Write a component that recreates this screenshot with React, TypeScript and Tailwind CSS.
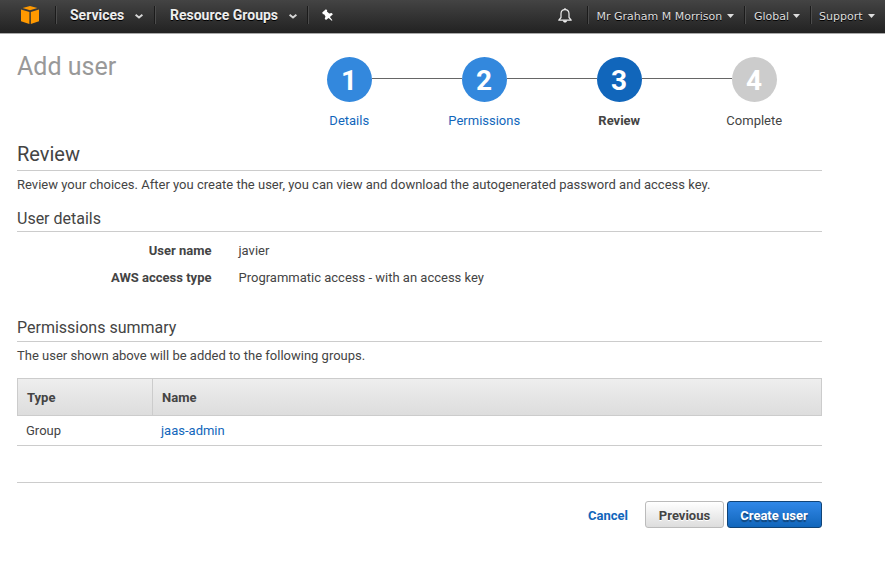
import React from "react";

const steps = [
  { n: 1, label: "Details", circle: "bg-[#3388dd]", text: "text-[#1166bb]" },
  { n: 2, label: "Permissions", circle: "bg-[#3388dd]", text: "text-[#1166bb]" },
  { n: 3, label: "Review", circle: "bg-[#1166bb]", text: "font-bold text-[#444444]" },
  { n: 4, label: "Complete", circle: "bg-[#cccccc]", text: "text-[#444444]" },
];

function Logo() {
  return (
    <svg className="ml-[21px] mt-[6px] h-[18px] w-[18px] shrink-0" viewBox="0 0 18 18" fill="#ff9900">
      <path d="M0 3.4 8.4 6v12L0 15.2z" />
      <path d="M18 3.4 9.8 6v12L18 15.2z" />
      <path d="M1.6 2.1 9 0l7.4 2.1L9 4.3z" />
    </svg>
  );
}

function Divider() {
  return <div className="mt-[6px] h-[18px] w-[2px] shrink-0 self-start border-l border-r border-l-[#1b1b1b] border-r-[#4c4c4c]" />;
}

function Chevron() {
  return (
    <svg className="h-[5px] w-[8px] shrink-0" viewBox="0 0 8 5" fill="none" stroke="#d6d6d6" strokeWidth="1.9">
      <path d="M.6.8 4 3.6 7.4.8" />
    </svg>
  );
}

function Caret() {
  return (
    <svg className="h-[4px] w-[7px] shrink-0" viewBox="0 0 7 4" fill="#dddddd">
      <path d="M0 0h7L3.5 4z" />
    </svg>
  );
}

function NavMenu({ label, className }: { label: string; className: string }) {
  return (
    <div className="flex h-[32px] shrink-0 items-center font-['DejaVu_Sans',sans-serif] text-[11px] text-[#dddddd]">
      <span className={`shrink-0 whitespace-nowrap pt-[2px] ${className}`}>{label}</span>
      <Caret />
    </div>
  );
}

function Nav() {
  return (
    <nav className="flex h-[34px] border-b border-[#aaaaaa] bg-linear-to-b from-[#444444] to-[#222222] [text-shadow:0_1px_0_#000]">
      <Logo />
      <div className="w-[16px] shrink-0" />
      <Divider />
      <div className="flex h-[31px] w-[97px] shrink-0 items-center pl-[13px] text-[14px] font-bold text-[#eeeeee]">
        <span className="w-[65px] shrink-0 whitespace-nowrap">Services</span>
        <span className="pt-[2px]"><Chevron /></span>
      </div>
      <Divider />
      <div className="flex h-[31px] w-[151px] shrink-0 items-center pl-[14px] text-[14px] font-bold text-[#eeeeee]">
        <span className="w-[119px] shrink-0 whitespace-nowrap">Resource Groups</span>
        <span className="pt-[2px]"><Chevron /></span>
      </div>
      <Divider />
      <svg className="ml-[13px] mt-[9px] h-[12px] w-[11px] shrink-0" viewBox="0 0 11 12" fill="#ffffff">
        <path d="M.2 3.6 3.9.2 5.2 1.3 4.9 2.6 7.2 4.6 9.6 4 10.9 5.2 7.9 8 10.4 11.3 9.8 11.8 6.6 9.1 4 11 2.7 9.8 3.5 7.6 2.1 5.2.9 5.2z" />
      </svg>
      <svg className="ml-[225px] mt-[8px] h-[15px] w-[14px] shrink-0" viewBox="0 0 14 15" fill="none" stroke="#eeeeee" strokeWidth="1.2">
        <path d="M.8 12.2h12.4L11 9.5V5.8C11 3.1 9.5 1.6 7 1.6S3 3.1 3 5.8v3.7z" strokeLinejoin="round" />
        <path d="M7 0v1.6" />
        <path d="M5 12.5h4C9 14 8.2 14.6 7 14.6S5 14 5 12.5z" fill="#eeeeee" stroke="none" />
      </svg>
      <div className="w-[15px] shrink-0" />
      <Divider />
      <NavMenu label="Mr Graham M Morrison" className="w-[138px] pl-[7.5px]" />
      <div className="w-[10px] shrink-0" />
      <Divider />
      <NavMenu label="Global" className="w-[47px] pl-[8px]" />
      <div className="w-[10px] shrink-0" />
      <Divider />
      <NavMenu label="Support" className="w-[56px] pl-[7px]" />
    </nav>
  );
}

function Steps() {
  return (
    <div className="grid w-[540px] grid-cols-4 pt-[23px]">
      {steps.map((s) => (
        <div key={s.n} className="flex flex-col items-center">
          <div className="flex w-full items-start">
            <div className={s.n === 1 ? "mt-[21px] h-px w-[45px]" : "mt-[21px] h-px w-[45px] bg-[#666666]"} />
            <div className={`flex h-[45px] w-[45px] items-center justify-center rounded-full pr-px pt-[3px] text-[28px] font-bold text-white ${s.circle}`}>
              {s.n}
            </div>
            <div className={s.n === 4 ? "mt-[21px] h-px w-[45px]" : "mt-[21px] h-px w-[45px] bg-[#666666]"} />
          </div>
          <div className={`mt-[9px] h-[20px] pr-[0.5px] leading-[20px] ${s.text}`}>{s.label}</div>
        </div>
      ))}
    </div>
  );
}

export default function App() {
  return (
    <div className="h-[571px] w-[885px] overflow-hidden bg-white font-['Roboto',sans-serif] text-[13px] text-[#444444]">
      <Nav />
      <main className="ml-[17px] w-[805px]">
        <header className="flex h-[104px] justify-between">
          <h1 className="pt-[18px] text-[25px] leading-[30px] text-[#999999]">Add user</h1>
          <Steps />
        </header>
        <h2 className="h-[33px] border-b border-[#cccccc] pt-[4px] text-[20px] leading-[24px]">Review</h2>
        <p className="pt-[4px] leading-[20px] tracking-[0.008px]">
          Review your choices. After you create the user, you can view and download the autogenerated password and access key.
        </p>
        <h3 className="mt-[13px] h-[24px] border-b border-[#cccccc] pt-px text-[16px] leading-[20px]">User details</h3>
        <dl className="grid grid-cols-[194.5px_1fr] gap-x-[27px] gap-y-[7px] pt-[9px] leading-[20px]">
          <dt className="text-right font-bold">User name</dt>
          <dd>javier</dd>
          <dt className="text-right font-bold">AWS access type</dt>
          <dd>Programmatic access - with an access key</dd>
        </dl>
        <h3 className="mt-[30px] h-[24px] border-b border-[#cccccc] text-[16px] leading-[20px]">Permissions summary</h3>
        <p className="h-[36px] pt-[4px] leading-[20px]">The user shown above will be added to the following groups.</p>
        <div className="grid h-[38px] grid-cols-[135px_1fr] items-stretch border border-[#cccccc] bg-linear-to-b from-[#eeeeee] to-[#dddddd] font-bold leading-[37px]">
          <div className="border-r border-[#cccccc] pl-[9px]">Type</div>
          <div className="pl-[9px]">Name</div>
        </div>
        <div className="grid h-[30px] grid-cols-[144px_1fr] border-b border-[#cccccc] leading-[29px]">
          <div className="pl-[9px]">Group</div>
          <div className="text-[#1166bb]">jaas-admin</div>
        </div>
        <footer className="mt-[36px] flex items-center justify-end border-t border-[#cccccc] pt-[18px] font-bold">
          <a className="mr-[17px] pt-[3px] text-[#1166bb]">Cancel</a>
          <button className="mr-[3px] h-[27px] w-[79px] rounded-[3px] border border-[#bbbbbb] bg-linear-to-b from-white to-[#dddddd] pt-[3px] [text-shadow:0_1px_0_#fff]">
            Previous
          </button>
          <button className="h-[27px] w-[95px] rounded-[3px] border border-[#114477] bg-linear-to-b from-[#3088e8] to-[#1166bb] pr-px pt-[3px] text-white [text-shadow:0_2px_1px_#114477]">
            Create user
          </button>
        </footer>
      </main>
    </div>
  );
}
